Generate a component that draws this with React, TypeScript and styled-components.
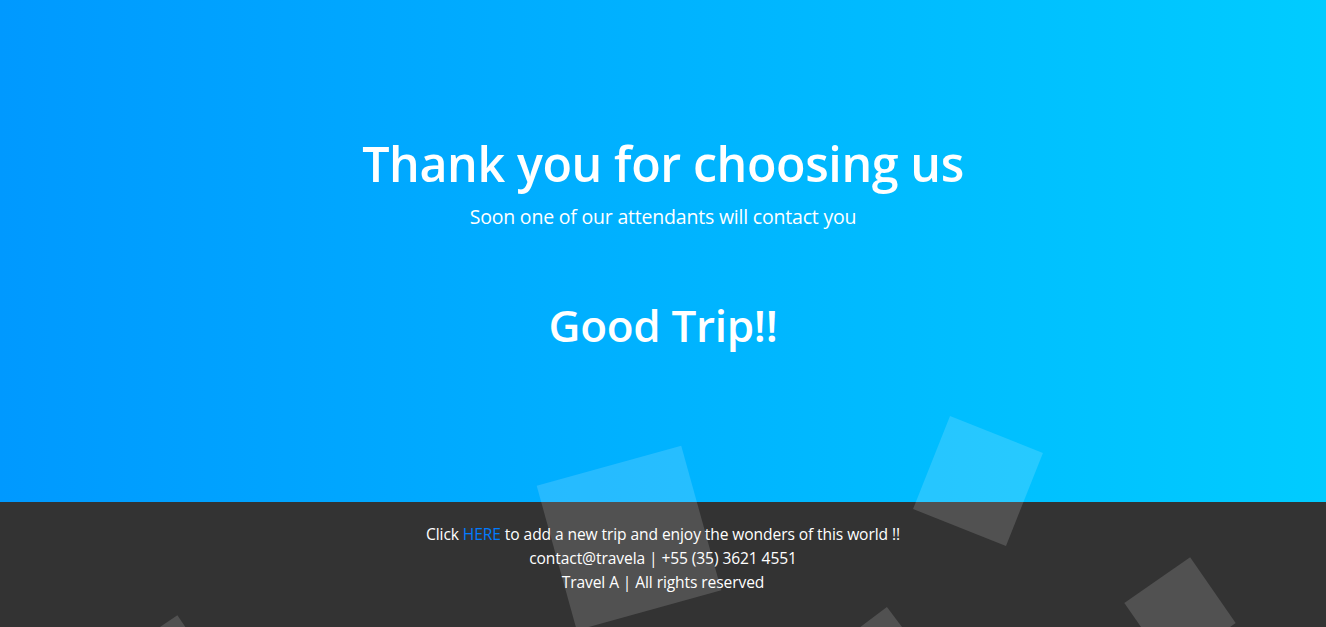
import React from "react";
import styled, { createGlobalStyle } from "styled-components";

const Global = createGlobalStyle`
  html, body { margin: 0; padding: 0; }
  body { font-family: "Open Sans", "Noto Sans", sans-serif; overflow: hidden; }
  * { box-sizing: border-box; }
`;

const Page = styled.div`
  position: relative;
  width: 100%;
  height: 627px;
  overflow: hidden;
  display: flex;
  flex-direction: column;
`;

const Hero = styled.section`
  height: 502px;
  background: linear-gradient(to right, #0099ff 0%, #00ccff 100%);
  color: #fff;
  display: flex;
  flex-direction: column;
  align-items: center;
  padding-top: 133px;
`;

const Title = styled.h1`
  margin: 0;
  font-size: 48.4px;
  font-weight: 600;
  line-height: 60px;
  letter-spacing: -0.4px;
`;

const Subtitle = styled.p`
  margin: 11px 0 0;
  font-size: 19.5px;
  font-weight: 400;
  line-height: 26px;
  letter-spacing: -0.2px;
`;

const Farewell = styled.h2`
  margin: 69px 0 0;
  font-size: 44px;
  font-weight: 600;
  line-height: 52px;
  letter-spacing: -0.3px;
`;

const Footer = styled.footer`
  flex: 1;
  background: #333333;
  color: #fff;
  display: flex;
  flex-direction: column;
  align-items: center;
  padding-top: 20px;
  font-size: 15.6px;
  line-height: 24px;
  letter-spacing: -0.1px;
`;

const Line = styled.div``;

const Link = styled.a`
  color: #007bff;
  text-decoration: none;
`;

const Square = styled.span<{ $size: number }>`
  position: absolute;
  width: ${(p) => p.$size}px;
  height: ${(p) => p.$size}px;
  background: rgba(255, 255, 255, 0.15);
  pointer-events: none;
`;

const squares = [
  { cx: 628.5, cy: 537.5, size: 150, rot: -15.5 },
  { cx: 978, cy: 481, size: 100, rot: 21.7 },
  { cx: 1180, cy: 613, size: 80, rot: -34.7 },
  { cx: 881, cy: 649, size: 60, rot: -37 },
  { cx: 172, cy: 643, size: 40, rot: -34 },
];

export default function App() {
  return (
    <Page>
      <Global />
      <Hero>
        <Title>Thank you for choosing us</Title>
        <Subtitle>Soon one of our attendants will contact you</Subtitle>
        <Farewell>Good Trip!!</Farewell>
      </Hero>
      <Footer>
        <Line>
          Click <Link href="#">HERE</Link> to add a new trip and enjoy the wonders of this world !!
        </Line>
        <Line>contact@travela | +55 (35) 3621 4551</Line>
        <Line>Travel A | All rights reserved</Line>
      </Footer>
      {squares.map((s, i) => (
        <Square
          key={i}
          $size={s.size}
          style={{
            left: s.cx - s.size / 2,
            top: s.cy - s.size / 2,
            transform: `rotate(${s.rot}deg)`,
          }}
        />
      ))}
    </Page>
  );
}
